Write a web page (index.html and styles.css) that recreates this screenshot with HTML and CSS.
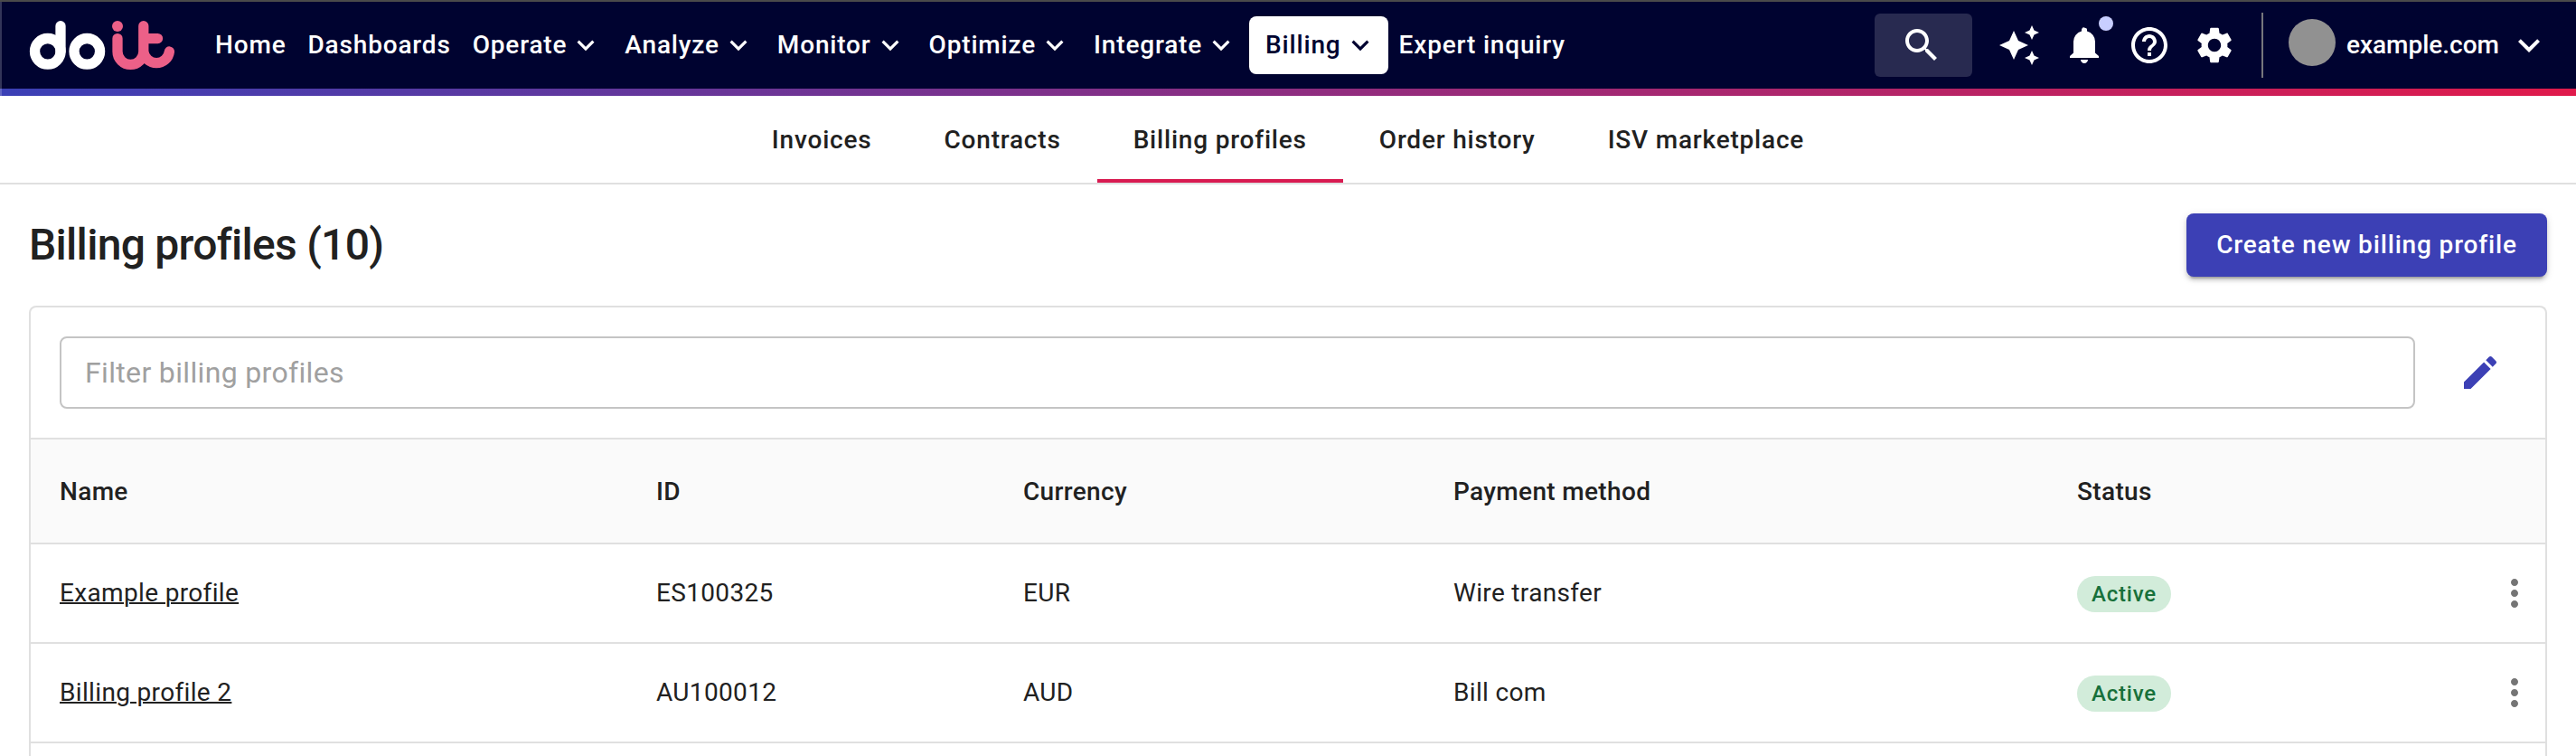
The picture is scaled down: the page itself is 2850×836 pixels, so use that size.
FILE: index.html
```html
<!DOCTYPE html>
<html lang="en">
<head>
<meta charset="utf-8">
<title>Billing profiles</title>
<link rel="stylesheet" href="styles.css">
</head>
<body>
<svg class="defs" aria-hidden="true">
  <symbol id="chevron" viewBox="0 0 24 24"><path d="M7.41 8.59 12 13.17l4.59-4.58L18 10l-6 6-6-6z"/></symbol>
  <symbol id="dots" viewBox="0 0 24 24"><path d="M12 8c1.1 0 2-.9 2-2s-.9-2-2-2-2 .9-2 2 .9 2 2 2zm0 2c-1.1 0-2 .9-2 2s.9 2 2 2 2-.9 2-2-.9-2-2-2zm0 6c-1.1 0-2 .9-2 2s.9 2 2 2 2-.9 2-2-.9-2-2-2z"/></symbol>
</svg>
<header class="topbar">
  <svg class="logo" viewBox="32 20 164 60" role="img" aria-label="doit">
    <g fill="none" stroke-width="11.3" stroke-linecap="round">
      <g stroke="#fff"><circle cx="52.8" cy="56.8" r="14.3"/><path d="M67 28.7V57"/><circle cx="96.3" cy="56.8" r="14.3"/></g>
      <g stroke="#ec6088"><path d="M130 42.6V57a14.4 14.4 0 0 0 28.8 0V28.7M158.8 42.6H174.5M158.8 57a14.4 14.4 0 0 0 28.6 0"/></g>
    </g>
    <circle cx="130" cy="29" r="6" fill="#ec6088"/>
  </svg>
  <nav class="menu">
    <a class="item">Home</a>
    <a class="item">Dashboards</a>
    <a class="item drop">Operate<svg><use href="#chevron"/></svg></a>
    <a class="item drop">Analyze<svg><use href="#chevron"/></svg></a>
    <a class="item drop">Monitor<svg><use href="#chevron"/></svg></a>
    <a class="item drop">Optimize<svg><use href="#chevron"/></svg></a>
    <a class="item drop">Integrate<svg><use href="#chevron"/></svg></a>
    <a class="item drop active">Billing<svg><use href="#chevron"/></svg></a>
    <a class="item">Expert inquiry</a>
  </nav>
  <div class="tools">
    <button class="search"><svg class="icon" viewBox="0 0 24 24"><path d="M15.5 14h-.79l-.28-.27C15.41 12.59 16 11.11 16 9.5 16 5.91 13.09 3 9.5 3S3 5.91 3 9.5 5.91 16 9.5 16c1.61 0 3.09-.59 4.23-1.57l.27.28v.79l5 4.99L20.49 19l-4.99-5zm-6 0C7.01 14 5 11.99 5 9.5S7.01 5 9.5 5 14 7.01 14 9.5 11.99 14 9.5 14z"/></svg></button>
    <svg class="icon" viewBox="0 0 24 24"><path d="M19 9l1.25-2.75L23 5l-2.75-1.25L19 1l-1.25 2.75L15 5l2.75 1.25L19 9zm-7.5.5L9 4 6.5 9.5 1 12l5.5 2.5L9 20l2.5-5.5L17 12l-5.5-2.5zM19 15l-1.25 2.75L15 19l2.75 1.25L19 23l1.25-2.75L23 19l-2.75-1.25L19 15z"/></svg>
    <span class="bell"><svg class="icon" viewBox="0 0 24 24"><path d="M4 19v-1l2-1.700V10q0-2.075 1.250-3.687T10.500 4.200v-.7q0-.625.438-1.062T12 2.300t1.063.3T13.500 3.500v.7q2 .5 3.250 2.113T18 10v6.300l2 1.700v1H4Zm8 3q-.825 0-1.413-.587T10 20h4q0 .825-.588 1.413T12 22"/></svg></span>
    <svg class="icon" viewBox="0 0 24 24"><path d="M11 18h2v-2h-2v2zm1-16C6.480 2 2 6.480 2 12s4.480 10 10 10 10-4.480 10-10S17.520 2 12 2zm0 18c-4.410 0-8-3.590-8-8s3.590-8 8-8 8 3.590 8 8-3.590 8-8 8zm0-14c-2.210 0-4 1.790-4 4h2c0-1.100.9-2 2-2s2 .9 2 2c0 2-3 1.750-3 5h2c0-2.250 3-2.500 3-5 0-2.210-1.790-4-4-4z"/></svg>
    <svg class="icon" viewBox="0 0 24 24"><path d="M19.140 12.940c.04-.3.06-.61.06-.94 0-.32-.02-.64-.07-.94l2.030-1.580c.18-.14.23-.41.12-.61l-1.920-3.320c-.12-.22-.37-.29-.59-.22l-2.390.96c-.5-.38-1.030-.7-1.620-.94l-.36-2.540c-.04-.24-.24-.41-.48-.41h-3.840c-.24 0-.43.17-.47.41l-.36 2.540c-.59.24-1.130.57-1.620.94l-2.390-.96c-.22-.08-.47 0-.59.22L2.740 8.870c-.12.21-.08.47.12.61l2.030 1.580c-.05.3-.09.63-.09.94s.02.64.07.94l-2.030 1.580c-.18.14-.23.41-.12.61l1.920 3.320c.12.22.37.29.59.22l2.390-.96c.5.38 1.030.7 1.620.94l.36 2.540c.05.24.24.41.48.41h3.840c.24 0 .44-.17.47-.41l.36-2.540c.59-.24 1.130-.56 1.620-.94l2.390.96c.22.08.47 0 .59-.22l1.920-3.320c.12-.22.07-.47-.12-.61l-2.010-1.580zM12 15.600c-1.980 0-3.600-1.620-3.600-3.600s1.620-3.600 3.600-3.600 3.600 1.620 3.600 3.600-1.620 3.600-3.600 3.600z"/></svg>
    <a class="account"><span class="avatar"></span>example.com<svg class="icon"><use href="#chevron"/></svg></a>
  </div>
</header>
<nav class="tabs">
  <a class="tab">Invoices</a>
  <a class="tab">Contracts</a>
  <a class="tab selected">Billing profiles</a>
  <a class="tab">Order history</a>
  <a class="tab">ISV marketplace</a>
</nav>
<main class="page">
  <div class="heading">
    <h1>Billing profiles (10)</h1>
    <button class="create">Create new billing profile</button>
  </div>
  <section class="card">
    <div class="filter">
      <input type="text" placeholder="Filter billing profiles">
      <svg class="icon edit" viewBox="0 0 24 24"><path d="M3 17.250V21h3.750L17.810 9.940l-3.750-3.750L3 17.250zM20.710 7.040c.39-.39.39-1.020 0-1.410l-2.340-2.340c-.39-.39-1.020-.39-1.410 0l-1.830 1.830 3.750 3.750 1.830-1.830z"/></svg>
    </div>
    <div class="row head"><span>Name</span><span>ID</span><span>Currency</span><span>Payment method</span><span>Status</span></div>
    <div class="row"><a class="link">Example profile</a><span>ES100325</span><span>EUR</span><span>Wire transfer</span><span class="chip">Active</span><svg class="icon more"><use href="#dots"/></svg></div>
    <div class="row"><a class="link">Billing profile 2</a><span>AU100012</span><span>AUD</span><span>Bill com</span><span class="chip">Active</span><svg class="icon more"><use href="#dots"/></svg></div>
  </section>
</main>
</body>
</html>
```
FILE: styles.css
```css
* { box-sizing: border-box; }
body {
  margin: 0;
  height: 836px;
  overflow: hidden;
  background: #fff;
  color: #212121;
  font: 400 28px/40px Roboto, "Liberation Sans", sans-serif;
}
button, input { font: inherit; border: 0; margin: 0; }
h1 { margin: 0; }
.defs { position: absolute; width: 0; height: 0; }
.icon { width: 48px; height: 48px; fill: currentColor; flex: none; }

.topbar {
  position: relative;
  display: flex;
  align-items: center;
  height: 106px;
  padding-left: 32px;
  border-top: 2px solid #4a4a4a;
  padding-bottom: 8px;
  color: #fff;
  font-weight: 500;
  background:
    linear-gradient(90deg, #3b40b6, #e01a4b) bottom / 100% 8px no-repeat,
    #000330;
}
.topbar::before {
  content: "";
  position: absolute;
  left: 0;
  top: 0;
  width: 2px;
  height: 104px;
  background: rgba(255, 255, 255, .2);
}
.logo { width: 164px; height: 60px; flex: none; }
.menu { display: flex; align-items: center; margin-left: 30px; }
.item {
  display: flex;
  align-items: center;
  height: 64px;
  padding: 0 12px;
  letter-spacing: .83px;
  white-space: nowrap;
}
.item svg { width: 38px; height: 38px; margin-left: 2px; fill: currentColor; }
.item.active {
  background: #fff;
  color: #000330;
  border-radius: 8px;
  padding: 0 12px 0 18px;
}

.tools { display: flex; align-items: center; margin-left: auto; padding-right: 28px; }
.search {
  display: flex;
  align-items: center;
  width: 108px;
  height: 70px;
  padding: 0 0 0 28px;
  margin-right: 28px;
  border-radius: 6px;
  background: #282a50;
  color: #fff;
}
.tools > .icon, .bell { margin-right: 24px; }
.bell { position: relative; height: 48px; }
.bell .icon { display: block; }
.bell::after {
  content: "";
  position: absolute;
  left: 40px;
  top: -8px;
  width: 16px;
  height: 16px;
  border-radius: 50%;
  background: #c8ceff;
}
.account {
  display: flex;
  align-items: center;
  height: 72px;
  margin-left: 4px;
  padding-left: 28px;
  border-left: 2px solid #77777c;
}
.avatar { width: 52px; height: 52px; margin: 0 12px 7px 0; border-radius: 50%; background: #919191; }
.account .icon { margin-left: 9px; }

.tabs {
  display: flex;
  justify-content: center;
  height: 98px;
  border-bottom: 2px solid #e0e0e0;
  font-weight: 500;
}
.tab { padding: 29px 40px 0; height: 96px; letter-spacing: .8px; }
.tab.selected { border-bottom: 4px solid #d81b51; }

.page { padding: 32px 32px 0; }
.heading { display: flex; justify-content: space-between; align-items: center; height: 70px; }
h1 { font-size: 48px; font-weight: 500; line-height: 70px; letter-spacing: -.72px; }
.create {
  width: 399px;
  height: 70px;
  border-radius: 8px;
  background: #3c40b5;
  color: #fff;
  font-weight: 500;
  letter-spacing: .85px;
  white-space: nowrap;
  padding: 0;
  box-shadow: 0 6px 2px -4px rgba(0,0,0,.2), 0 4px 4px rgba(0,0,0,.14), 0 2px 10px rgba(0,0,0,.12);
}
.card {
  height: 498px;
  margin-top: 32px;
  border: 2px solid #e0e0e0;
  border-bottom: 0;
  border-radius: 8px 8px 0 0;
  letter-spacing: .34px;
}
.filter { display: flex; align-items: center; height: 144px; padding: 0 48px 0 32px; }
.filter input {
  flex: 1;
  height: 80px;
  padding: 0 26px;
  border: 2px solid #c4c4c4;
  border-radius: 8px;
  font-size: 32px;
  letter-spacing: .34px;
}
.filter input::placeholder { color: #a0a0a0; opacity: 1; }
.edit { color: #3c40b5; margin-left: 48px; }
.row {
  display: grid;
  grid-template-columns: 660px 406px 476px 690px 1fr 48px;
  align-items: center;
  height: 110px;
  padding: 0 10px 0 32px;
  border-bottom: 2px solid #e0e0e0;
}
.row.head {
  height: 118px;
  padding-top: 2px;
  border-top: 2px solid #e0e0e0;
  background: #fafafa;
  font-weight: 500;
}
.link { text-decoration: underline; text-decoration-thickness: 2px; }
.chip {
  justify-self: start;
  height: 40px;
  margin-top: 2px;
  padding: 0 16px;
  border-radius: 20px;
  background: #d2ecda;
  color: #17703a;
  font-size: 24px;
  font-weight: 500;
  letter-spacing: .8px;
}
.more { color: #757575; }
```
